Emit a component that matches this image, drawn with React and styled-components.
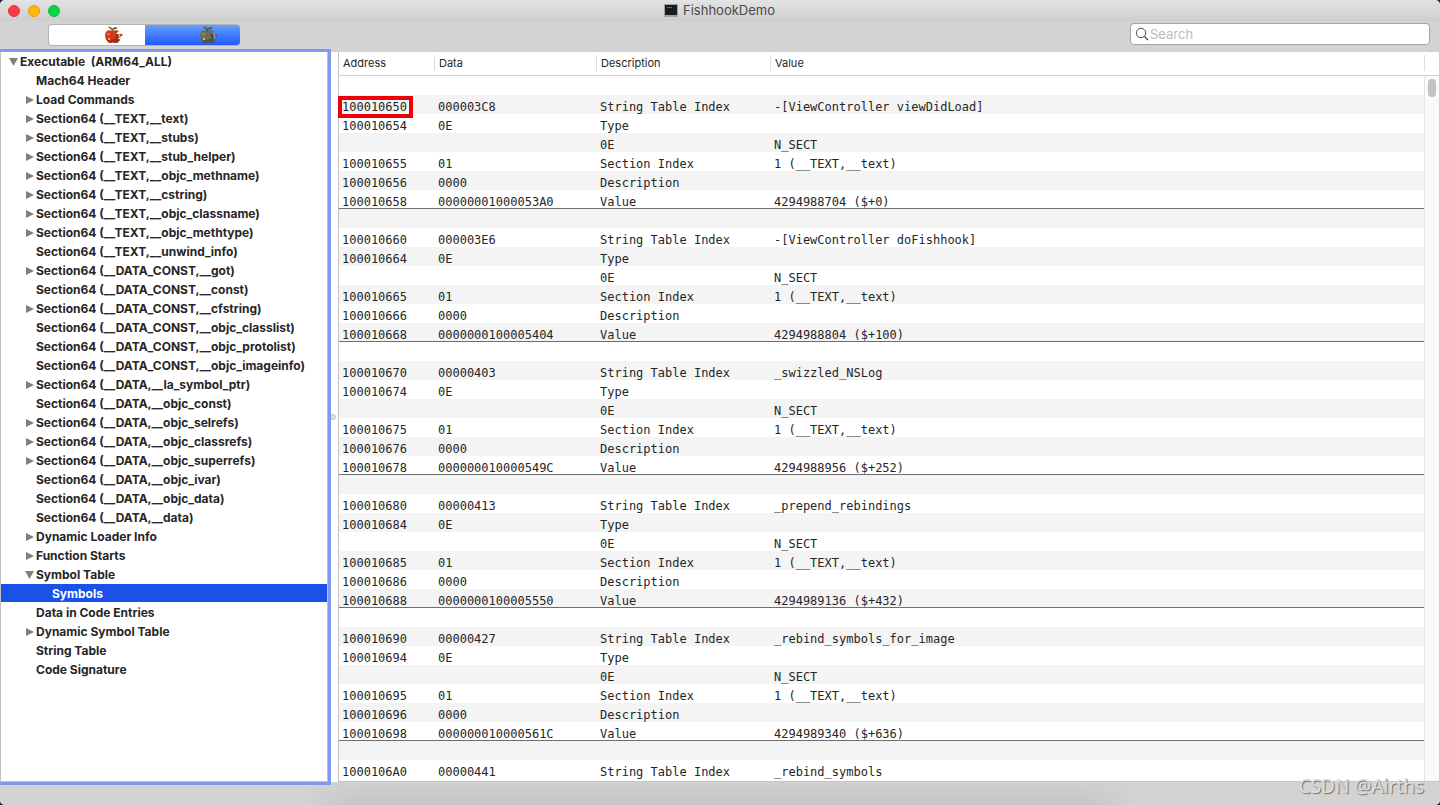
import React from 'react';
import styled, { createGlobalStyle, css } from 'styled-components';

const GlobalStyle = createGlobalStyle`
  * {
    box-sizing: border-box;
  }

  body {
    margin: 0;
    background: #1b2436;
    font-family: Inter, 'Liberation Sans', sans-serif;
    font-size: 12px;
    color: #262626;
    overflow: hidden;
  }
`;

const Window = styled.div`
  display: flex;
  flex-direction: column;
  height: 100vh;
  background: #d3d3d3;
  border-radius: 5px;
  overflow: hidden;
`;

const TitleBar = styled.header`
  display: grid;
  grid-template-columns: 1fr auto 1fr;
  align-items: center;
  height: 21px;
  flex: none;
  padding: 0 9px 0 8px;
  background: linear-gradient(#e3e3e3, #cecece);
`;

const Lights = styled.div`
  display: flex;
  gap: 8px;
`;

const Light = styled.button`
  width: 12px;
  height: 12px;
  padding: 0;
  border: 1px solid ${(props) => props.$edge};
  border-radius: 50%;
  background: ${(props) => props.$color};
`;

const Title = styled.h1`
  display: flex;
  align-items: center;
  gap: 5px;
  margin: 0;
  font-size: 13px;
  line-height: 18px;
  padding-bottom: 1px;
  font-weight: 400;
  color: #4a4a4a;
`;

const Toolbar = styled.div`
  display: flex;
  justify-content: space-between;
  align-items: flex-start;
  height: 31px;
  flex: none;
  padding: 2px 10px 0 48px;
`;

const Segments = styled.div`
  display: flex;
  width: 192px;
  height: 22px;
  border-radius: 4px;
  overflow: hidden;
  border: 1px solid #b4b4b4;
  border-right: 0;
  margin-top: 1px;
`;

const Segment = styled.button`
  display: flex;
  flex: 1;
  align-items: center;
  justify-content: center;
  border: 0;
  padding: 0 0 0 34px;
  background: ${(props) =>
    props.$active ? 'linear-gradient(#64a0fc, #2058fb)' : '#fff'};
`;

const SearchBox = styled.label`
  display: flex;
  align-items: center;
  width: 300px;
  height: 22px;
  padding: 0 4px;
  border: 1px solid #a3a3a3;
  border-radius: 4px;
  background: #fff;

  input {
    flex: 1;
    min-width: 0;
    padding: 0 0 0 1px;
    border: 0;
    outline: 0;
    background: none;
    font: inherit;
    font-size: 13px;
  }

  input::placeholder {
    color: #bdbdbd;
    opacity: 1;
  }
`;

const Panes = styled.main`
  display: flex;
  flex: 1;
  min-height: 0;
  background: #fff;
`;

const Sidebar = styled.nav`
  position: relative;
  width: 328px;
  flex: none;
  border: 1px solid #c2c2c2;
  border-top: 0;
  background: #fff;
  box-shadow: 0 0 0 3px #8099ea;
`;

const Tree = styled.ul`
  margin: 0;
  padding: 0;
  list-style: none;
`;

const TreeRow = styled.button`
  display: flex;
  align-items: center;
  width: 100%;
  height: 18px;
  margin-bottom: 1px;
  border: 0;
  padding: 2px 0 0 ${(props) => 7 + props.$depth * 16}px;
  background: ${(props) => (props.$selected ? '#1a52e8' : 'none')};
  color: ${(props) => (props.$selected ? '#fff' : '#262626')};
  font: inherit;
  font-weight: 700;
  line-height: 16px;
  text-align: left;
  white-space: pre;
`;

const Arrow = styled.svg`
  width: 12px;
  height: 10px;
  flex: none;
  fill: #808080;
`;

const Splitter = styled.div`
  display: flex;
  align-items: center;
  justify-content: center;
  width: 10px;
  flex: none;

  span {
    width: 6px;
    height: 6px;
    border: 1px solid #c4c4c4;
    border-radius: 50%;
    background: #dedede;
  }
`;

const TablePane = styled.section`
  display: flex;
  flex: 1;
  min-width: 0;
  overflow: hidden;
  border-bottom: 1px solid #c6c6c6;
  box-shadow: inset 1px 0 #c2c2c2;
  padding-left: 1px;
`;

const Table = styled.table`
  flex: 1;
  align-self: flex-start;
  width: 100%;
  border-collapse: separate;
  border-spacing: 0;
  table-layout: fixed;
`;

const HeadCell = styled.th`
  height: 24px;
  padding: 3px 0 4px;
  border-bottom: 1px solid #d0d0d0;
  font-size: 11px;
  line-height: 16px;
  font-weight: 400;
  text-align: left;

  div {
    padding: 0 4px;
    border-right: ${(props) => (props.$last ? '0' : '1px solid #dcdcdc')};
  }
`;

const Row = styled.tr`
  td {
    height: 19px;
    padding: 6px 0 0 3px;
    font-family: 'DejaVu Sans Mono', monospace;
    font-size: 12px;
    line-height: 13px;
    white-space: pre;
    vertical-align: top;
    background: ${(props) => (props.$odd ? '#f4f4f4' : '#fff')};
    ${(props) =>
      props.$end &&
      css`
        box-shadow: inset 0 -1px #6e6e6e;
      `}
  }
`;

const Marked = styled.mark`
  background: none;
  color: inherit;
  outline: 4px solid #ee0008;
  padding-right: 2px;
`;

const ScrollColumn = styled.div`
  display: flex;
  flex-direction: column;
  width: 16px;
  flex: none;
  border-right: 1px solid #d0d0d0;
`;

const ScrollHead = styled.div`
  height: 24px;
  flex: none;
  border-bottom: 1px solid #d0d0d0;
  padding: 3px 0 4px;

  &::before {
    content: '';
    display: block;
    height: 16px;
    border-left: 1px solid #dcdcdc;
  }
`;

const Track = styled.div`
  flex: 1;
  padding: 3px;
  border-left: 1px solid #e4e4e4;
  background: #fafafa;

  span {
    display: block;
    width: 8px;
    height: 18px;
    border-radius: 4px;
    background: #c1c1c1;
  }
`;

const Footer = styled.footer`
  display: flex;
  justify-content: flex-end;
  align-items: flex-start;
  height: 23px;
  flex: none;
  padding-right: 16px;
  background: linear-gradient(to right, #d3d3d3 21%, transparent 25%, transparent 75%, #d3d3d3 79%),
    linear-gradient(#d0d0d0, #c4c4c4);
`;

const Watermark = styled.span`
  position: relative;
  margin-top: -8px;
  font-family: 'Noto Sans', sans-serif;
  font-size: 19px;
  line-height: 24px;
  color: #dedede;
  text-shadow: 1px 1px 1px #6f6f6f;
`;

const tree = [
  ['Executable  (ARM64_ALL)', 0, 'open'],
  ['Mach64 Header', 1],
  ['Load Commands', 1, 'closed'],
  ['Section64 (__TEXT,__text)', 1, 'closed'],
  ['Section64 (__TEXT,__stubs)', 1, 'closed'],
  ['Section64 (__TEXT,__stub_helper)', 1, 'closed'],
  ['Section64 (__TEXT,__objc_methname)', 1, 'closed'],
  ['Section64 (__TEXT,__cstring)', 1, 'closed'],
  ['Section64 (__TEXT,__objc_classname)', 1, 'closed'],
  ['Section64 (__TEXT,__objc_methtype)', 1, 'closed'],
  ['Section64 (__TEXT,__unwind_info)', 1],
  ['Section64 (__DATA_CONST,__got)', 1, 'closed'],
  ['Section64 (__DATA_CONST,__const)', 1],
  ['Section64 (__DATA_CONST,__cfstring)', 1, 'closed'],
  ['Section64 (__DATA_CONST,__objc_classlist)', 1],
  ['Section64 (__DATA_CONST,__objc_protolist)', 1],
  ['Section64 (__DATA_CONST,__objc_imageinfo)', 1],
  ['Section64 (__DATA,__la_symbol_ptr)', 1, 'closed'],
  ['Section64 (__DATA,__objc_const)', 1],
  ['Section64 (__DATA,__objc_selrefs)', 1, 'closed'],
  ['Section64 (__DATA,__objc_classrefs)', 1, 'closed'],
  ['Section64 (__DATA,__objc_superrefs)', 1, 'closed'],
  ['Section64 (__DATA,__objc_ivar)', 1],
  ['Section64 (__DATA,__objc_data)', 1],
  ['Section64 (__DATA,__data)', 1],
  ['Dynamic Loader Info', 1, 'closed'],
  ['Function Starts', 1, 'closed'],
  ['Symbol Table', 1, 'open'],
  ['Symbols', 2],
  ['Data in Code Entries', 1],
  ['Dynamic Symbol Table', 1, 'closed'],
  ['String Table', 1],
  ['Code Signature', 1],
];

const symbols = [
  ['10001065', '000003C8', '-[ViewController viewDidLoad]', '00000001000053A0', '4294988704 ($+0)'],
  ['10001066', '000003E6', '-[ViewController doFishhook]', '0000000100005404', '4294988804 ($+100)'],
  ['10001067', '00000403', '_swizzled_NSLog', '000000010000549C', '4294988956 ($+252)'],
  ['10001068', '00000413', '_prepend_rebindings', '0000000100005550', '4294989136 ($+432)'],
  ['10001069', '00000427', '_rebind_symbols_for_image', '000000010000561C', '4294989340 ($+636)'],
];

const rows = symbols.flatMap(([base, index, name, data, value]) => [
  ['', '', '', ''],
  [`${base}0`, index, 'String Table Index', name],
  [`${base}4`, '0E', 'Type', ''],
  ['', '', '0E', 'N_SECT'],
  [`${base}5`, '01', 'Section Index', '1 (__TEXT,__text)'],
  [`${base}6`, '0000', 'Description', ''],
  [`${base}8`, data, 'Value', value],
]);
rows.push(['', '', '', ''], ['1000106A0', '00000441', 'String Table Index', '_rebind_symbols']);

const Apple = ({ body, dark, light, leaf }) => (
  <svg width="20" height="18" viewBox="0 0 20 18" aria-hidden="true">
    <path
      d="M8 5C5 3 1 5 1 9c0 4 2.500 8 5.500 8 1 0 1.500-.6 2.500-.6s2 .6 3 .6c2 0 3.500-2 4-3.500l-3-1.500-1.500-2.500 1-2.500L15 5.500C13 3.800 11 4 8 5z"
      fill={body}
    />
    <path
      d="M2 12c2 2 6 2.500 9 .5l1-1 1.500 1.500 2.500.8c-.8 1.700-2 3.200-4 3.200-1 0-2-.6-3-.6s-1.500.6-2.500.6C4.500 17 3 15 2 12z"
      fill={dark}
      opacity="0.6"
    />
    <path d="M12 7.500l2 1 1.500-.5.500 1.500-1.500 1 .8 1.500-2.300.5-1.500-2.500z" fill={dark} />
    <path d="M14 9.200l2.500-1.700 2.500.5-1 1.500-2 .8 1 1.700-1.500.5z" fill={light} />
    <path d="M16 8.500h2.500l-.5 1.500-1.500.5z" fill={dark} />
    <ellipse cx="4.500" cy="8" rx="2" ry="1.300" fill={light} opacity="0.5" />
    <circle cx="5" cy="13" r="1" fill="#ead79a" />
    <path d="M8.500 6.500C8 4.500 7 3 5 2l-1-1.500L6.500 1l2 1.500L11 1l3 .8-2.500 1.500-2.300.2.300 3z" fill={leaf} />
  </svg>
);

const TreeArrow = ({ state }) => (
  <Arrow viewBox="0 0 12 10" aria-hidden="true">
    {state === 'open' && <path d="M1 1h9L5.500 9z" />}
    {state === 'closed' && <path d="M2 1l8 4-8 4z" />}
  </Arrow>
);

const App = () => (
  <>
    <GlobalStyle />
    <Window>
      <TitleBar>
        <Lights>
          <Light aria-label="Close" $color="#fc3b48" $edge="#e2323e" />
          <Light aria-label="Minimize" $color="#fdb80c" $edge="#e0a10e" />
          <Light aria-label="Zoom" $color="#05d53f" $edge="#0bbb36" />
        </Lights>
        <Title>
          <svg width="14" height="13" viewBox="0 0 14 13" aria-hidden="true">
            <rect width="14" height="13" fill="#9aa3a8" />
            <rect x="1" y="1" width="12" height="10" fill="#191b1c" />
            <path d="M3 3.500h5" stroke="#24a178" strokeDasharray="1.500 .5" />
          </svg>
          FishhookDemo
        </Title>
      </TitleBar>
      <Toolbar>
        <Segments>
          <Segment aria-label="Red apple">
            <Apple body="#d23a1b" dark="#8c1f12" light="#f59a70" leaf="#626a2c" />
          </Segment>
          <Segment aria-label="Gray apple" $active>
            <Apple body="#6d6c57" dark="#45432f" light="#a89a80" leaf="#4e5a35" />
          </Segment>
        </Segments>
        <SearchBox>
          <svg width="14" height="14" viewBox="0 0 14 14" fill="none" stroke="#4c4c4c" aria-hidden="true">
            <circle cx="6" cy="6" r="4.700" />
            <path d="M9.500 9.500l3.500 3.500" strokeWidth="1.300" />
          </svg>
          <input type="text" placeholder="Search" aria-label="Search" />
        </SearchBox>
      </Toolbar>
      <Panes>
        <Sidebar>
          <Tree>
            {tree.map(([label, depth, state]) => (
              <li key={label}>
                <TreeRow $depth={depth} $selected={label === 'Symbols'}>
                  <TreeArrow state={state} />
                  {label}
                </TreeRow>
              </li>
            ))}
          </Tree>
        </Sidebar>
        <Splitter>
          <span />
        </Splitter>
        <TablePane>
          <Table>
            <colgroup>
              <col width="96" />
              <col width="162" />
              <col width="174" />
              <col />
            </colgroup>
            <thead>
              <tr>
                <HeadCell><div>Address</div></HeadCell>
                <HeadCell><div>Data</div></HeadCell>
                <HeadCell><div>Description</div></HeadCell>
                <HeadCell $last><div>Value</div></HeadCell>
              </tr>
            </thead>
            <tbody>
              {rows.map((cells, i) => (
                <Row key={i} $odd={i % 2 === 1} $end={i % 7 === 6}>
                  {cells.map((cell, j) => (
                    <td key={j}>{i === 1 && j === 0 ? <Marked>{cell}</Marked> : cell}</td>
                  ))}
                </Row>
              ))}
            </tbody>
          </Table>
          <ScrollColumn>
            <ScrollHead />
            <Track>
              <span />
            </Track>
          </ScrollColumn>
        </TablePane>
      </Panes>
      <Footer>
        <Watermark>CSDN @Airths</Watermark>
      </Footer>
    </Window>
  </>
);

export default App;
